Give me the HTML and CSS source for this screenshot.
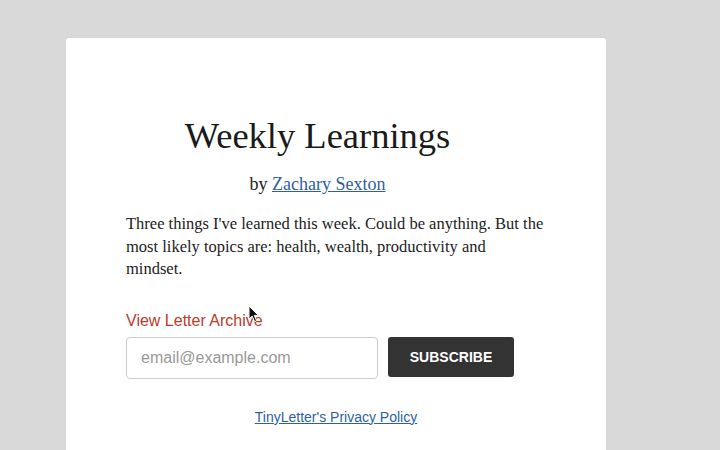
FILE: index.html
```html
<!DOCTYPE html>
<html>
<head>
	<title>Weekly Learnings</title>
	<link rel="stylesheet" href="styles.css">
</head>
<body>
	<div class="letter-card">
		<div class="letter-header">
			<h1 class="letter-title">Weekly Learnings</h1>
			<p class="letter-author">by <a href="#">Zachary Sexton</a></p>
		</div>
		<p class="letter-desc">Three things I've learned this week. Could be anything. But the most likely topics are: health, wealth, productivity and mindset.</p>
		<a class="archive-link" href="#">View Letter Archive</a>
		<form class="subscribe-form">
			<input type="text" placeholder="email@example.com">
			<button type="button">SUBSCRIBE</button>
		</form>
		<div class="privacy">
			<a href="#">TinyLetter's Privacy Policy</a>
		</div>
		<!-- mouse pointer from the capture -->
		<svg class="pointer" width="12" height="18" viewBox="0 0 12 18">
			<path d="M1 1 L1 14 L4.2 11.2 L6.6 16.6 L8.6 15.7 L6.3 10.4 L10.4 10.4 Z" fill="#111" stroke="#fff" stroke-width="1"/>
		</svg>
	</div>
</body>
</html>
```

FILE: styles.css
```css
body {
	margin: 0;
	background-color: #d9d9d9;
	font-family: "Liberation Sans", Arial, sans-serif;
}

.letter-card {
	position: relative;
	width: 420px;
	min-height: 400px;
	margin: 38px 0 0 66px;
	padding: 76px 60px 30px;
	background-color: #fff;
	border-radius: 3px;
	box-shadow: 0 0 1px rgba(0, 0, 0, 0.15);
}

.letter-header {
	padding-right: 37px;
	text-align: center;
}

.letter-title {
	margin: 0;
	font-family: "Liberation Serif", Georgia, serif;
	font-weight: normal;
	font-size: 36.5px;
	color: #1a1a1a;
}

.letter-author {
	margin: 17px 0 0;
	font-family: "Liberation Serif", Georgia, serif;
	font-size: 18px;
	color: #222;
}

.letter-author a {
	color: #2d5fa6;
}

.letter-desc {
	max-width: 418px;
	margin: 18px 0 0;
	font-family: "Liberation Serif", Georgia, serif;
	font-size: 16.5px;
	line-height: 22.5px;
	color: #222;
}

.archive-link {
	display: block;
	margin-top: 31px;
	font-size: 16px;
	color: #c0392b;
	text-decoration: none;
}

.subscribe-form {
	display: flex;
	align-items: flex-start;
	gap: 10px;
	margin-top: 7px;
}

.subscribe-form input {
	width: 252px;
	height: 42px;
	box-sizing: border-box;
	padding: 0 14px;
	border: 1px solid #ccc;
	border-radius: 4px;
	font-family: "Liberation Sans", Arial, sans-serif;
	font-size: 16px;
}

.subscribe-form input::placeholder {
	color: #999;
}

.subscribe-form button {
	width: 126px;
	height: 40px;
	border: none;
	border-radius: 3px;
	background-color: #333;
	color: #fff;
	font-family: "Liberation Sans", Arial, sans-serif;
	font-weight: bold;
	font-size: 14px;
}

.privacy {
	margin-top: 30px;
	text-align: center;
	font-size: 14px;
}

.privacy a {
	color: #2d5fa6;
}

.pointer {
	position: absolute;
	left: 182px;
	top: 267px;
}
```
